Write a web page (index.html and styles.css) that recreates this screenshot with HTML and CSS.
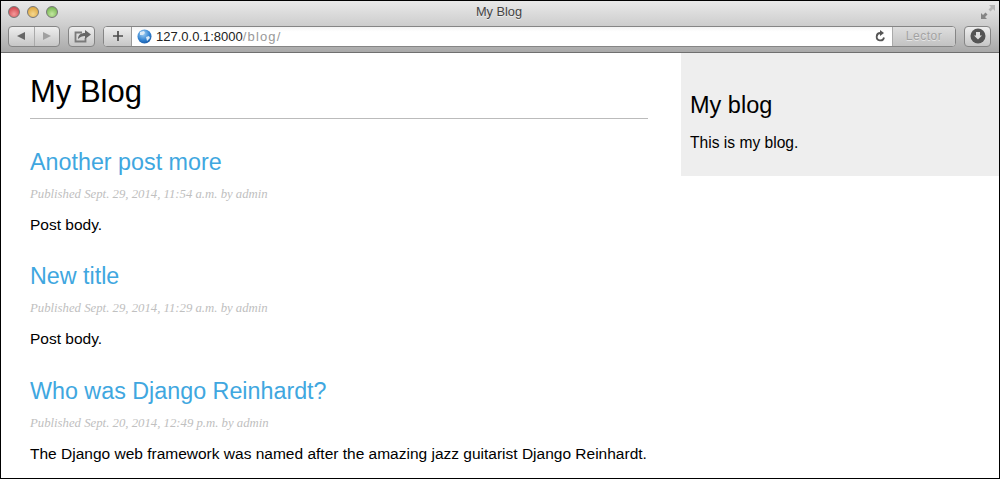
FILE: index.html
```html
<!DOCTYPE html>
<html lang="en">
<head>
<meta charset="utf-8">
<title>My Blog</title>
<link rel="stylesheet" href="styles.css">
</head>
<body>
<div class="window">
  <header class="chrome">
    <div class="titlebar">
      <div class="lights"><span class="light red"></span><span class="light yellow"></span><span class="light green"></span></div>
      <div class="title">My Blog</div>
      <svg class="expand" width="14" height="14" viewBox="0 0 14 14"><path d="M8 0h6v6l-2-2-2.500 2.500-2-2L10 2z" fill="#b4b4b4"/><path d="M0 8v6h6l-2-2 2.500-2.500-2-2L2 10z" fill="#858585"/></svg>
    </div>
    <div class="toolbar">
      <div class="btn nav">
        <span class="seg"><svg width="10" height="10" viewBox="0 0 10 10"><path d="M9 1v8L1 5z" fill="#666"/></svg></span>
        <span class="seg last"><svg width="10" height="10" viewBox="0 0 10 10"><path d="M1 1v8l8-4z" fill="#a0a0a0"/></svg></span>
      </div>
      <div class="btn share"><svg width="18" height="14" viewBox="0 0 18 14"><path d="M9 3.500H2.500v9h10V9" fill="none" stroke="#7a7a7a" stroke-width="1.800"/><path d="M5 10c0-4 3-6 7-6V1l6 4.500L12 10V7c-3 0-5 1-7 3z" fill="#666"/></svg></div>
      <div class="address">
        <div class="plus"><svg width="10" height="10" viewBox="0 0 10 10"><path d="M5 0v10M0 5h10" stroke="#4c4c4c" stroke-width="1.700"/></svg></div>
        <div class="field">
          <svg class="globe" width="15" height="15" viewBox="0 0 15 15"><defs><radialGradient id="g" cx=".4" cy=".3" r=".8"><stop offset="0" stop-color="#a8d4f5"/><stop offset=".6" stop-color="#2f80d0"/><stop offset="1" stop-color="#14509c"/></radialGradient></defs><circle cx="7.500" cy="7.500" r="7" fill="url(#g)"/><path d="M3 3l4-1 1 2-2 2-3 0zM9 8l3-1 1 2-3 3z" fill="#dcebf7"/></svg>
          <span class="url">127.0.0.1:8000<span class="path">/blog/</span></span>
          <svg class="reload" width="11" height="12" viewBox="0 0 11 12"><path d="M9 7.500A3.700 3.700 0 1 1 5.500 3" fill="none" stroke="#555" stroke-width="1.800"/><path d="M5 0l4 3-4 3z" fill="#555"/></svg>
        </div>
        <div class="lector">Lector</div>
      </div>
      <div class="btn download"><svg width="16" height="16" viewBox="0 0 16 16"><circle cx="8" cy="8" r="7.500" fill="#555"/><path d="M6 4h4v3.500h2L8 11.500 4 7.500h2z" fill="#e0e0e0"/></svg></div>
    </div>
  </header>
  <div class="page">
    <main class="content">
      <h1 class="site-title">My Blog</h1>
      <article class="post">
        <h2 class="post-title">Another post more</h2>
        <p class="date">Published Sept. 29, 2014, 11:54 a.m. by admin</p>
        <p class="body">Post body.</p>
      </article>
      <article class="post">
        <h2 class="post-title">New title</h2>
        <p class="date">Published Sept. 29, 2014, 11:29 a.m. by admin</p>
        <p class="body">Post body.</p>
      </article>
      <article class="post">
        <h2 class="post-title">Who was Django Reinhardt?</h2>
        <p class="date">Published Sept. 20, 2014, 12:49 p.m. by admin</p>
        <p class="body">The Django web framework was named after the amazing jazz guitarist Django Reinhardt.</p>
      </article>
    </main>
    <aside class="sidebar">
      <h2 class="side-title">My blog</h2>
      <p class="side-text">This is my blog.</p>
    </aside>
  </div>
</div>
</body>
</html>
```
FILE: styles.css
```css
* { box-sizing: border-box; }
html, body { margin: 0; padding: 0; }
body { width: 1000px; height: 479px; overflow: hidden; background: #fff; font-family: "Liberation Sans", Arial, sans-serif; color: #000; }
.window { width: 1000px; height: 479px; border: 1px solid #000; display: flex; flex-direction: column; overflow: hidden; }
.chrome { height: 52px; flex: none; background: linear-gradient(#e9e9e9, #cfcfcf 45%, #a9a9a9); border-bottom: 1px solid #6f6f6f; }
.titlebar { height: 23px; display: grid; grid-template-columns: 1fr auto 1fr; align-items: center; padding: 0 4px 2px 7px; }
.lights { display: flex; gap: 7px; }
.light { width: 12px; height: 12px; border-radius: 50%; border: 1px solid #777; }
.red { background: radial-gradient(circle at 50% 70%, #f49a9a, #c8303a); }
.yellow { background: radial-gradient(circle at 50% 70%, #f5d890, #d89a2a); }
.green { background: radial-gradient(circle at 50% 70%, #c4e8a0, #62a83e); }
.title { text-align: center; font-size: 12.800px; color: #444; text-shadow: 0 1px 0 #eee; padding-right: 5px; }
.expand { justify-self: end; }
.toolbar { height: 27px; display: flex; align-items: center; padding: 0 8px 3px 7px; gap: 8px; }
.btn { height: 21px; border: 1px solid #858585; border-radius: 4px; background: linear-gradient(#eee, #c6c6c6); display: flex; align-items: center; justify-content: center; flex: none; }
.nav { width: 52px; }
.seg { flex: 1; height: 100%; display: flex; align-items: center; justify-content: center; border-right: 1px solid #aaa; }
.seg.last { border-right: 0; }
.share { width: 27px; }
.address { flex: 1; height: 21px; display: flex; border: 1px solid #858585; border-radius: 4px; overflow: hidden; background: #fff; }
.plus { width: 28px; flex: none; background: linear-gradient(#eee, #c6c6c6); border-right: 1px solid #999; display: flex; align-items: center; justify-content: center; }
.field { flex: 1; display: flex; align-items: center; padding: 0 5px; background: linear-gradient(#f4f4f4, #fff 25%); }
.globe { flex: none; margin-right: 4px; }
.url { flex: 1; font-size: 13px; color: #222; }
.path { color: #999; letter-spacing: 1.150px; }
.reload { flex: none; margin-right: 1px; }
.lector { width: 63px; flex: none; background: linear-gradient(#dedede, #c2c2c2); border-left: 1px solid #aaa; color: #a2a2a2; font-size: 12px; letter-spacing: .5px; display: flex; align-items: center; justify-content: center; text-shadow: 0 1px 0 #e6e6e6; }
.download { width: 27px; }
.page { flex: 1; display: flex; align-items: flex-start; }
.content { width: 680px; flex: none; padding: 20px 33px 0 29px; }
.site-title { margin: 0; height: 46px; padding-top: 1px; font-size: 31px; line-height: 36px; font-weight: 400; border-bottom: 1px solid #bbb; }
.post { height: 114.300px; }
.post-title { margin: 0; padding-top: 29px; font-size: 23.300px; line-height: 28px; font-weight: 400; color: #3fa7e0; }
.date { margin: 11px 0 0; font-family: "Liberation Serif", serif; font-style: italic; font-size: 12.750px; line-height: 15px; color: #c0c0c0; }
.body { margin: 14px 0 0; font-size: 15.500px; line-height: 18px; }
.sidebar { flex: 1; height: 123px; background: #eee; padding: 38px 20px 0 9px; }
.side-title { margin: 0; font-size: 23.500px; line-height: 28px; font-weight: 400; }
.side-text { margin: 15px 0 0; font-size: 15.600px; line-height: 18px; }
```
